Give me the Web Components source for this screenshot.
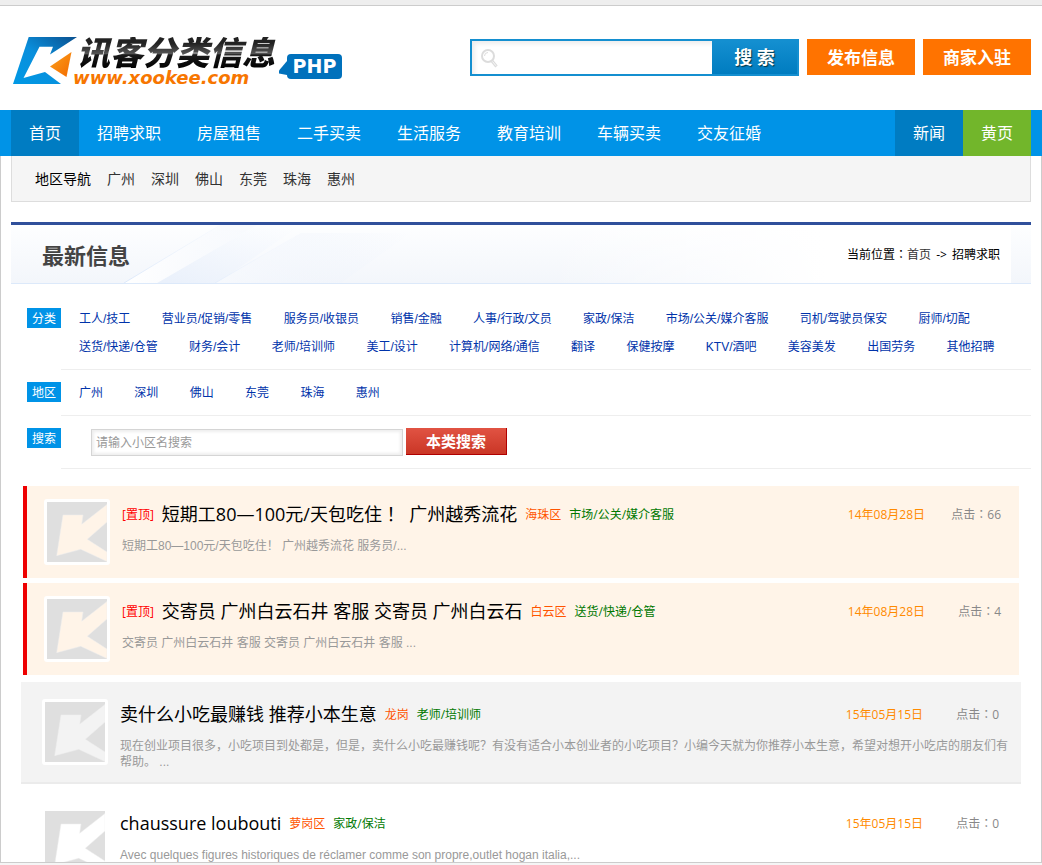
<!DOCTYPE html>
<html lang="zh-CN">
<head>
<meta charset="utf-8">
<title>讯客分类信息</title>
<style>
  html, body { margin: 0; height: 100%; }
  body {
    background: #f5f5f5;
    color: #000;
    font: 12px/16px "Open Sans", "Noto Sans CJK SC", sans-serif;
  }
  section-title a { color: #333; text-decoration: none; }
  section-title b { font-weight: normal; padding: 0 2px; }
</style>
</head>
<body>
<site-page>
  <site-header slot="header"></site-header>
  <main-nav slot="header"></main-nav>
  <area-nav></area-nav>
  <section-title>
    最新信息
    <span slot="path" lang="zh-TW">当前位置：<a href="#home">首页</a> <b>-&gt;</b> 招聘求职</span>
  </section-title>
  <filter-row label="分类">
    <a href="#c1">工人/技工</a>
    <a href="#c2">营业员/促销/零售</a>
    <a href="#c3">服务员/收银员</a>
    <a href="#c4">销售/金融</a>
    <a href="#c5">人事/行政/文员</a>
    <a href="#c6">家政/保洁</a>
    <a href="#c7">市场/公关/媒介客服</a>
    <a href="#c8">司机/驾驶员保安</a>
    <a href="#c9">厨师/切配</a>
    <a href="#c10">送货/快递/仓管</a>
    <a href="#c11">财务/会计</a>
    <a href="#c12">老师/培训师</a>
    <a href="#c13">美工/设计</a>
    <a href="#c14">计算机/网络/通信</a>
    <a href="#c15">翻译</a>
    <a href="#c16">保健按摩</a>
    <a href="#c17">KTV/酒吧</a>
    <a href="#c18">美容美发</a>
    <a href="#c19">出国劳务</a>
    <a href="#c20">其他招聘</a>
  </filter-row>
  <filter-row label="地区">
    <a href="#a1">广州</a>
    <a href="#a2">深圳</a>
    <a href="#a3">佛山</a>
    <a href="#a4">东莞</a>
    <a href="#a5">珠海</a>
    <a href="#a6">惠州</a>
  </filter-row>
  <filter-row label="搜索"><local-search></local-search></filter-row>
  <listing-list>
    <listing-card pinned>
      <a slot="title" href="#p1">短期工80—100元/天包吃住<span lang="zh-TW">！</span>&nbsp; 广州越秀流花</a>
      <a slot="area" href="#a1">海珠区</a>
      <a slot="category" href="#c7">市场/公关/媒介客服</a>
      <time slot="date" datetime="2014-08-28">14年08月28日</time>
      <span slot="clicks" lang="zh-TW">点击：66</span>
      短期工80—100元/天包吃住！ 广州越秀流花 服务员/...
    </listing-card>
    <listing-card pinned>
      <a slot="title" href="#p2">交寄员 广州白云石井 客服 交寄员 广州白云石</a>
      <a slot="area" href="#a1">白云区</a>
      <a slot="category" href="#c10">送货/快递/仓管</a>
      <time slot="date" datetime="2014-08-28">14年08月28日</time>
      <span slot="clicks" lang="zh-TW">点击：4</span>
      交寄员 广州白云石井 客服 交寄员 广州白云石井 客服 ...
    </listing-card>
    <listing-card shaded>
      <a slot="title" href="#p3">卖什么小吃最赚钱 推荐小本生意</a>
      <a slot="area" href="#a2">龙岗</a>
      <a slot="category" href="#c12">老师/培训师</a>
      <time slot="date" datetime="2015-05-15">15年05月15日</time>
      <span slot="clicks" lang="zh-TW">点击：0</span>
      现在创业项目很多，小吃项目到处都是，但是，卖什么小吃最赚钱呢？有没有适合小本创业者的小吃项目？小编今天就为你推荐小本生意，希望对想开小吃店的朋友们有帮助。 ...
    </listing-card>
    <listing-card>
      <a slot="title" href="#p4">chaussure loubouti</a>
      <a slot="area" href="#a1">萝岗区</a>
      <a slot="category" href="#c6">家政/保洁</a>
      <time slot="date" datetime="2015-05-15">15年05月15日</time>
      <span slot="clicks" lang="zh-TW">点击：0</span>
      Avec quelques figures historiques de réclamer comme son propre,outlet hogan italia,...
    </listing-card>
  </listing-list>
</site-page>

<script>
function define(name, html) {
  const template = document.createElement('template');
  template.innerHTML = html;
  customElements.define(name, class extends HTMLElement {
    constructor() {
      super();
      this.attachShadow({ mode: 'open' }).append(template.content.cloneNode(true));
    }
    connectedCallback() {
      const label = this.shadowRoot.querySelector('[data-label]');
      if (label) label.textContent = this.getAttribute('label');
    }
  });
}

define('site-page', `
  <style>
    :host { display: flex; flex-direction: column; height: 100vh; box-sizing: border-box; padding-bottom: 2px; }
    .strip { flex: none; height: 5px; background: #eee; border-bottom: 1px solid #ccc; }
    main {
      flex: 1; min-height: 0; overflow-y: auto; scrollbar-width: none;
      background: #fff; border: 1px solid #ccc; border-top: 0; padding: 0 10px;
    }
  </style>
  <div class="strip"></div>
  <slot name="header"></slot>
  <main><slot></slot></main>
`);

define('brand-logo', `
  <style>
    :host { display: block; }
    a { display: flex; text-decoration: none; }
    .mark { width: 60px; height: 47px; flex: none; overflow: visible; }
    .names { display: flex; flex-direction: column; gap: 2px; }
    .cn {
      font: italic 900 33px/28px "Noto Sans CJK SC", sans-serif;
      color: transparent;
      background: linear-gradient(#222 20%, #555 52%, #1a1a1a 56%, #000);
      -webkit-background-clip: text; background-clip: text;
      padding: 0 4px 4px;
    }
    .url { font: italic bold 18px/14px "DejaVu Sans", sans-serif; color: #f77600; }
    .badge { display: flex; align-items: center; align-self: flex-start; margin-top: 17px; }
    .badge svg { width: 8px; height: 20px; flex: none; }
    .php {
      background: #0071bc; color: #fff; border-radius: 4px; width: 55px; text-align: center;
      font: bold 19px/25px "DejaVu Sans", sans-serif;
    }
  </style>
  <a href="#home">
    <svg class="mark" viewBox="13 37 60 47" aria-hidden="true">
      <defs><linearGradient id="b" x1="0" y1="1" x2="1" y2="0">
        <stop offset="0" stop-color="#0099e5"/><stop offset=".5" stop-color="#0a8fdc"/><stop offset="1" stop-color="#0a4f8e"/>
      </linearGradient>
      <linearGradient id="o" x1="0" y1="0" x2="1" y2="1">
        <stop offset="0" stop-color="#fba11c"/><stop offset="1" stop-color="#f36a00"/>
      </linearGradient></defs>
      <path fill="url(#b)" d="M28.700 37H77L50 54.500 53 46.700H39.500L23.500 78 45 72 61 84H13Z"/>
      <path fill="url(#o)" d="M71.500 52 50 66.500 66.500 77Z"/>
    </svg>
    <span class="names"><span class="cn">讯客分类信息</span><span class="url">www.xookee.com</span></span>
    <span class="badge">
      <svg viewBox="0 0 8 20" aria-hidden="true"><path fill="#0071bc" d="M8 4V18L-2 16Z"/></svg>
      <span class="php">PHP</span>
    </span>
  </a>
`);

define('site-header', `
  <style>
    :host { display: flex; align-items: flex-start; justify-content: space-between; flex: none; height: 104px; box-sizing: border-box; background: #fff; padding: 31px 11px 0 13px; }
    .tools { display: flex; align-items: flex-start; gap: 8px; padding-top: 2px; }
    form { display: flex; height: 37px; width: 329px; box-sizing: border-box; border: 2px solid #148fd0; background: #fff; }
    .field { display: flex; align-items: center; flex: 1; min-width: 0; padding-left: 8px; box-shadow: inset 3px 3px 4px #eee; }
    .field svg { width: 20px; height: 20px; flex: none; }
    input { flex: 1; min-width: 0; border: 0; outline: 0; background: none; padding: 0 6px; font: 14px/20px "Open Sans", "Noto Sans CJK SC", sans-serif; }
    form button {
      width: 85px; border: 0; padding: 0 0 2px; color: #fff; background: linear-gradient(#148fd0, #007cc0);
      font: bold 18px/30px "Open Sans", "Noto Sans CJK SC", sans-serif; text-shadow: 1px 1px 1px #034;
    }
    .cta {
      width: 108px; background: #ff7300; color: #fff; text-align: center; text-decoration: none;
      font: bold 17px/36px "Noto Sans CJK SC", sans-serif;
    }
  </style>
  <brand-logo></brand-logo>
  <div class="tools">
    <form role="search">
      <label class="field">
        <svg viewBox="0 0 20 20" fill="none" stroke="#dcdcdc" aria-hidden="true">
          <circle cx="8" cy="8" r="6" stroke-width="2"/>
          <path d="M4.500 8A3.500 3.500 0 0 1 8 4.500"/>
          <path stroke-width="3" d="M12 13 16.500 18.500"/>
          <path stroke="#fff" stroke-width=".8" d="M12.500 13.500 16 17.800"/>
        </svg>
        <input type="text" aria-label="搜索">
      </label>
      <button type="button">搜 索</button>
    </form>
    <a class="cta" href="#post">发布信息</a>
    <a class="cta" href="#join">商家入驻</a>
  </div>
`);

define('main-nav', `
  <style>
    :host { display: block; flex: none; background: #0093e7; padding: 0 11px; }
    nav { display: flex; }
    a { color: #fff; text-decoration: none; padding: 0 18px 2px; font: 16px/44px "Noto Sans CJK SC", sans-serif; }
    .on { background: #007cc2; }
    .push { margin-left: auto; }
    .green { background: #72b62b; }
  </style>
  <nav>
    <a class="on" href="#home">首页</a>
    <a href="#n1">招聘求职</a>
    <a href="#n2">房屋租售</a>
    <a href="#n3">二手买卖</a>
    <a href="#n4">生活服务</a>
    <a href="#n5">教育培训</a>
    <a href="#n6">车辆买卖</a>
    <a href="#n7">交友征婚</a>
    <a class="on push" href="#news">新闻</a>
    <a class="green" href="#yellow">黄页</a>
  </nav>
`);

define('area-nav', `
  <style>
    :host { display: block; margin-bottom: 20px; background: #f5f5f5; border: 1px solid #ddd; border-top: 0; }
    nav { display: flex; gap: 16px; padding: 0 23px; font: 14px/45px "Noto Sans CJK SC", sans-serif; }
    a { color: #333; text-decoration: none; }
  </style>
  <nav>
    <span>地区导航</span>
    <a href="#a1">广州</a>
    <a href="#a2">深圳</a>
    <a href="#a3">佛山</a>
    <a href="#a4">东莞</a>
    <a href="#a5">珠海</a>
    <a href="#a6">惠州</a>
  </nav>
`);

define('section-title', `
  <style>
    :host {
      display: flex; align-items: center; justify-content: space-between; position: relative;
      height: 58px; border-top: 3px solid #2f4f9b; border-bottom: 1px solid #dce9fa;
      background: linear-gradient(#fdfeff, #f3f6fb); padding-left: 31px; margin-bottom: 20px;
    }
    .rays { position: absolute; left: 0; top: 0; width: 400px; height: 58px; }
    h1 { position: relative; margin: 0; color: #444; font: bold 22px/58px "Noto Sans CJK SC", sans-serif; }
    .path {
      position: relative; align-self: stretch; margin-right: 20px; padding: 2px 11px 0 300px; line-height: 56px;
      background: linear-gradient(90deg, transparent, #fff 60%);
      font-family: "Open Sans", "Noto Sans CJK TC", sans-serif;
    }
  </style>
  <svg class="rays" viewBox="0 0 400 58" aria-hidden="true">
    <defs><linearGradient id="r" x1="0" y1="0" x2="1" y2="0">
      <stop offset="0" stop-color="#fff"/><stop offset="1" stop-color="#e8effb" stop-opacity="0"/>
    </linearGradient>
    <linearGradient id="s" x1="0" y1="1" x2="1" y2="0">
      <stop offset="0" stop-color="#e9f0fb"/><stop offset="1" stop-color="#f4f8fe" stop-opacity="0"/>
    </linearGradient>
    <linearGradient id="t" x1="0" y1="1" x2="1" y2="0">
      <stop offset="0" stop-color="#dce8fa"/><stop offset="1" stop-color="#f4f8fe" stop-opacity="0"/>
    </linearGradient></defs>
    <path fill="url(#s)" d="M146 58 246 0H290L206 58Z"/>
    <path fill="url(#r)" d="M113 58 209 0H246L146 58ZM204 58 290 8H400L330 58Z"/>
    <path fill="none" stroke="url(#t)" d="M113 58 209 0M204 58 290 8"/>
  </svg>
  <h1><slot></slot></h1>
  <div class="path"><slot name="path"></slot></div>
`);

define('filter-row', `
  <style>
    :host { display: flex; align-items: flex-start; padding-left: 16px; }
    .tag { flex: none; width: 34px; margin-top: 4px; background: #0093e7; color: #fff; text-align: center; font: 12px/20px "Noto Sans CJK SC", sans-serif; }
    .body {
      flex: 1; min-width: 0; min-height: 28px; padding: 1px 0 8px 18px; margin-bottom: 8px; border-bottom: 1px solid #eee;
      font: 12px/28px "Liberation Sans", "Noto Sans CJK SC", sans-serif;
    }
    ::slotted(a) { color: #03a; text-decoration: none; white-space: nowrap; margin-right: 28px; }
  </style>
  <div class="tag" data-label></div>
  <div class="body"><slot></slot></div>
`);

define('local-search', `
  <style>
    :host { display: block; padding: 3px 0 4px 12px; }
    form { display: flex; gap: 3px; }
    input {
      width: 312px; height: 27px; margin-top: 1px; box-sizing: border-box; border: 1px solid #d5d5d5; padding: 1px 4px 0; outline: 0;
      box-shadow: inset 2px 2px 3px #eee, inset -2px -2px 3px #eee;
      font: 12px/20px "Liberation Sans", "Noto Sans CJK SC", sans-serif;
    }
    input::placeholder { color: #999; }
    button {
      width: 101px; height: 27px; padding: 0; color: #fff;
      border: 0 solid #b00000; border-width: 0 1px 1px 0; background: linear-gradient(#e15343, #ca3626);
      font: bold 15px/26px "Noto Sans CJK SC", sans-serif;
    }
  </style>
  <form>
    <input type="text" aria-label="小区名" placeholder="请输入小区名搜索">
    <button type="button">本类搜索</button>
  </form>
`);

define('listing-list', `
  <style>
    :host { display: block; padding: 9px 10px 0; }
    ::slotted(listing-card) { margin-bottom: 7px; }
    ::slotted([pinned]) { margin: 0 2px 5px; }
    ::slotted([shaded]) { margin-top: 7px; }
  </style>
  <slot></slot>
`);

define('listing-card', `
  <style>
    :host { --paper: #fff; display: flex; align-items: flex-start; gap: 12px; padding: 17px 12px 12px 21px; border-bottom: 2px solid var(--line, #fff); background: var(--paper); }
    :host([shaded]) { --paper: #f3f3f3; --line: #ebebeb; }
    :host([pinned]) { --paper: #fff4e8; padding: 13px 8px 13px 17px; border-left: 4px solid #e00; border-bottom: 0; }
    .thumb { flex: none; width: 60px; height: 60px; border: 3px solid #fff; border-radius: 3px; background: #dfdfdf; }
    .text { flex: 1; min-width: 0; padding-top: 2px; }
    .head { display: flex; align-items: center; height: 26px; gap: 8px; padding-right: 10px; white-space: nowrap; }
    .pin { display: none; color: #f00; margin-top: 2px; }
    :host([pinned]) .pin { display: block; }
    ::slotted(a) { text-decoration: none; }
    h2 { margin: 0; font: 18px/26px "Open Sans", "Noto Sans CJK SC", sans-serif; }
    ::slotted([slot=title]) { color: #000; }
    ::slotted([slot=area]) { color: #ff5400; margin-top: 2px; }
    ::slotted([slot=category]) { color: #007800; margin-top: 2px; }
    ::slotted([slot=date]) { color: #ff8a00; margin: 2px 0 0 auto; }
    ::slotted([slot=clicks]) { color: #888; width: 68px; margin-top: 2px; text-align: right; font-family: "Open Sans", "Noto Sans CJK TC", sans-serif; }
    p { margin: 11px 0 0; color: #999; font: 12px/16px "Liberation Sans", "Noto Sans CJK SC", sans-serif; }
  </style>
  <svg class="thumb" viewBox="0 0 60 60" aria-hidden="true">
    <path fill="var(--paper)" stroke="#eee" stroke-width=".5" d="M16 13H36L34.700 22.300 60 2.500V20L40.300 37.300 60 50V59.500L33.700 47.300 9.700 53.700Z"/>
  </svg>
  <div class="text">
    <div class="head">
      <span class="pin">[置顶]</span>
      <h2><slot name="title"></slot></h2>
      <slot name="area"></slot>
      <slot name="category"></slot>
      <slot name="date"></slot>
      <slot name="clicks"></slot>
    </div>
    <p><slot></slot></p>
  </div>
`);
</script>
</body>
</html>
